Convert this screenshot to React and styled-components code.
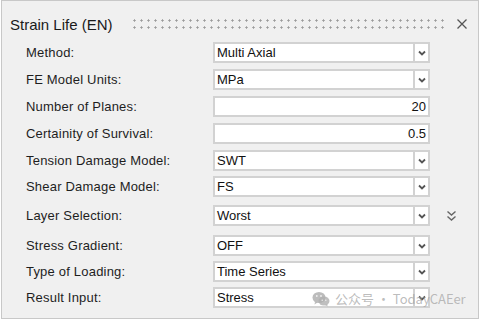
import React from "react";
import styled, { createGlobalStyle } from "styled-components";

const Global = createGlobalStyle`
  html, body { margin: 0; padding: 0; background: #ffffff; }
  body { font-family: "Liberation Sans", Arial, sans-serif; }
`;

const Panel = styled.div`
  position: relative;
  box-sizing: border-box;
  width: 478px;
  height: 319px;
  margin-left: 1px;
  border: 1px solid #c8c8c8;
  background: #f0f0f0;
  overflow: hidden;
`;

const Header = styled.div`
  display: flex;
  align-items: center;
  height: 36px;
  margin-top: 5px;
  padding: 0 10px 0 8px;
`;

const Title = styled.div`
  font-size: 15px;
  color: #1a1a1a;
  white-space: nowrap;
`;

const Grip = styled.div`
  flex: 1;
  height: 14px;
  margin: 0 10px 0 18px;
  background-image: radial-gradient(circle, #9a9a9a 0.9px, transparent 1.3px);
  background-size: 7px 7px;
  background-position: 0 0;
`;

const Close = styled.svg`
  width: 12px;
  height: 12px;
  flex: none;
`;

const Form = styled.div`
  display: flex;
  flex-direction: column;
  padding-left: 24px;
`;

const Row = styled.div`
  display: flex;
  align-items: center;
  height: 21px;
  margin-top: ${(p) => p.$mt}px;
`;

const Label = styled.div`
  width: 187px;
  flex: none;
  font-size: 13px;
  letter-spacing: 0.2px;
  color: #1e1e1e;
  white-space: nowrap;
`;

const Field = styled.div`
  box-sizing: border-box;
  width: 217px;
  height: 21px;
  flex: none;
  display: flex;
  align-items: stretch;
  border: 2px solid #d2d2d2;
  background: #ffffff;
`;

const Value = styled.div`
  flex: 1;
  display: flex;
  align-items: center;
  justify-content: ${(p) => (p.$num ? "flex-end" : "flex-start")};
  padding: 0 2px;
  font-size: 13px;
  color: #111;
  white-space: nowrap;
  overflow: hidden;
`;

const DropBtn = styled.div`
  width: 13px;
  flex: none;
  display: flex;
  align-items: center;
  justify-content: center;
  border-left: 2px solid #d2d2d2;
  background: #ffffff;
`;

const Extra = styled.div`
  width: 30px;
  display: flex;
  justify-content: center;
  padding-left: 6px;
`;

const Watermark = styled.div`
  position: absolute;
  left: 310px;
  top: 288px;
  display: flex;
  align-items: center;
  gap: 5px;
  font-family: "Noto Sans CJK SC", "Liberation Sans", sans-serif;
  font-size: 13px;
  color: rgba(160, 160, 160, 0.7);
  white-space: nowrap;
  pointer-events: none;
`;

const Chevron = () => (
  <svg width="8" height="6" viewBox="0 0 8 6">
    <polyline points="1,1.5 4,4.5 7,1.5" fill="none" stroke="#555" strokeWidth="1.8" />
  </svg>
);

const DoubleChevron = () => (
  <svg width="11" height="12" viewBox="0 0 11 12">
    <polyline points="1.5,1.5 5.5,5 9.5,1.5" fill="none" stroke="#666" strokeWidth="1.4" />
    <polyline points="1.5,6.5 5.5,10 9.5,6.5" fill="none" stroke="#666" strokeWidth="1.4" />
  </svg>
);

const WeChat = () => (
  <svg width="18" height="16" viewBox="0 0 18 16">
    <ellipse cx="7" cy="6.5" rx="6.5" ry="5.5" fill="rgba(160,160,160,0.7)" />
    <path d="M3 11 L2.5 13.5 L5.5 11.5 Z" fill="rgba(160,160,160,0.7)" />
    <ellipse cx="12" cy="10" rx="5.5" ry="4.5" fill="rgba(175,175,175,0.8)" />
    <path d="M15 13.5 L15.8 15.5 L13 14 Z" fill="rgba(175,175,175,0.8)" />
    <circle cx="4.8" cy="5" r="0.9" fill="#f0f0f0" />
    <circle cx="9" cy="5" r="0.9" fill="#f0f0f0" />
    <circle cx="10.2" cy="9.3" r="0.7" fill="#f0f0f0" />
    <circle cx="13.8" cy="9.3" r="0.7" fill="#f0f0f0" />
  </svg>
);

const rows = [
  { label: "Method:", value: "Multi Axial", drop: true, mt: 0 },
  { label: "FE Model Units:", value: "MPa", drop: true, mt: 6 },
  { label: "Number of Planes:", value: "20", num: true, mt: 6 },
  { label: "Certainity of Survival:", value: "0.5", num: true, mt: 6 },
  { label: "Tension Damage Model:", value: "SWT", drop: true, mt: 6 },
  { label: "Shear Damage Model:", value: "FS", drop: true, mt: 5 },
  { label: "Layer Selection:", value: "Worst", drop: true, mt: 8, extra: true },
  { label: "Stress Gradient:", value: "OFF", drop: true, mt: 9 },
  { label: "Type of Loading:", value: "Time Series", drop: true, mt: 5 },
  { label: "Result Input:", value: "Stress", drop: true, mt: 5 },
];

export default function App() {
  return (
    <>
      <Global />
      <Panel>
        <Header>
          <Title>Strain Life (EN)</Title>
          <Grip />
          <Close viewBox="0 0 12 12">
            <path d="M1.5 1.5 L10.5 10.5 M10.5 1.5 L1.5 10.5" stroke="#555" strokeWidth="1.3" />
          </Close>
        </Header>
        <Form>
          {rows.map((r) => (
            <Row key={r.label} $mt={r.mt}>
              <Label>{r.label}</Label>
              <Field>
                <Value $num={r.num}>{r.value}</Value>
                {r.drop && (
                  <DropBtn>
                    <Chevron />
                  </DropBtn>
                )}
              </Field>
              {r.extra && (
                <Extra>
                  <DoubleChevron />
                </Extra>
              )}
            </Row>
          ))}
        </Form>
        <Watermark>
          <WeChat />
          <span>公众号 · TodayCAEer</span>
        </Watermark>
      </Panel>
    </>
  );
}
